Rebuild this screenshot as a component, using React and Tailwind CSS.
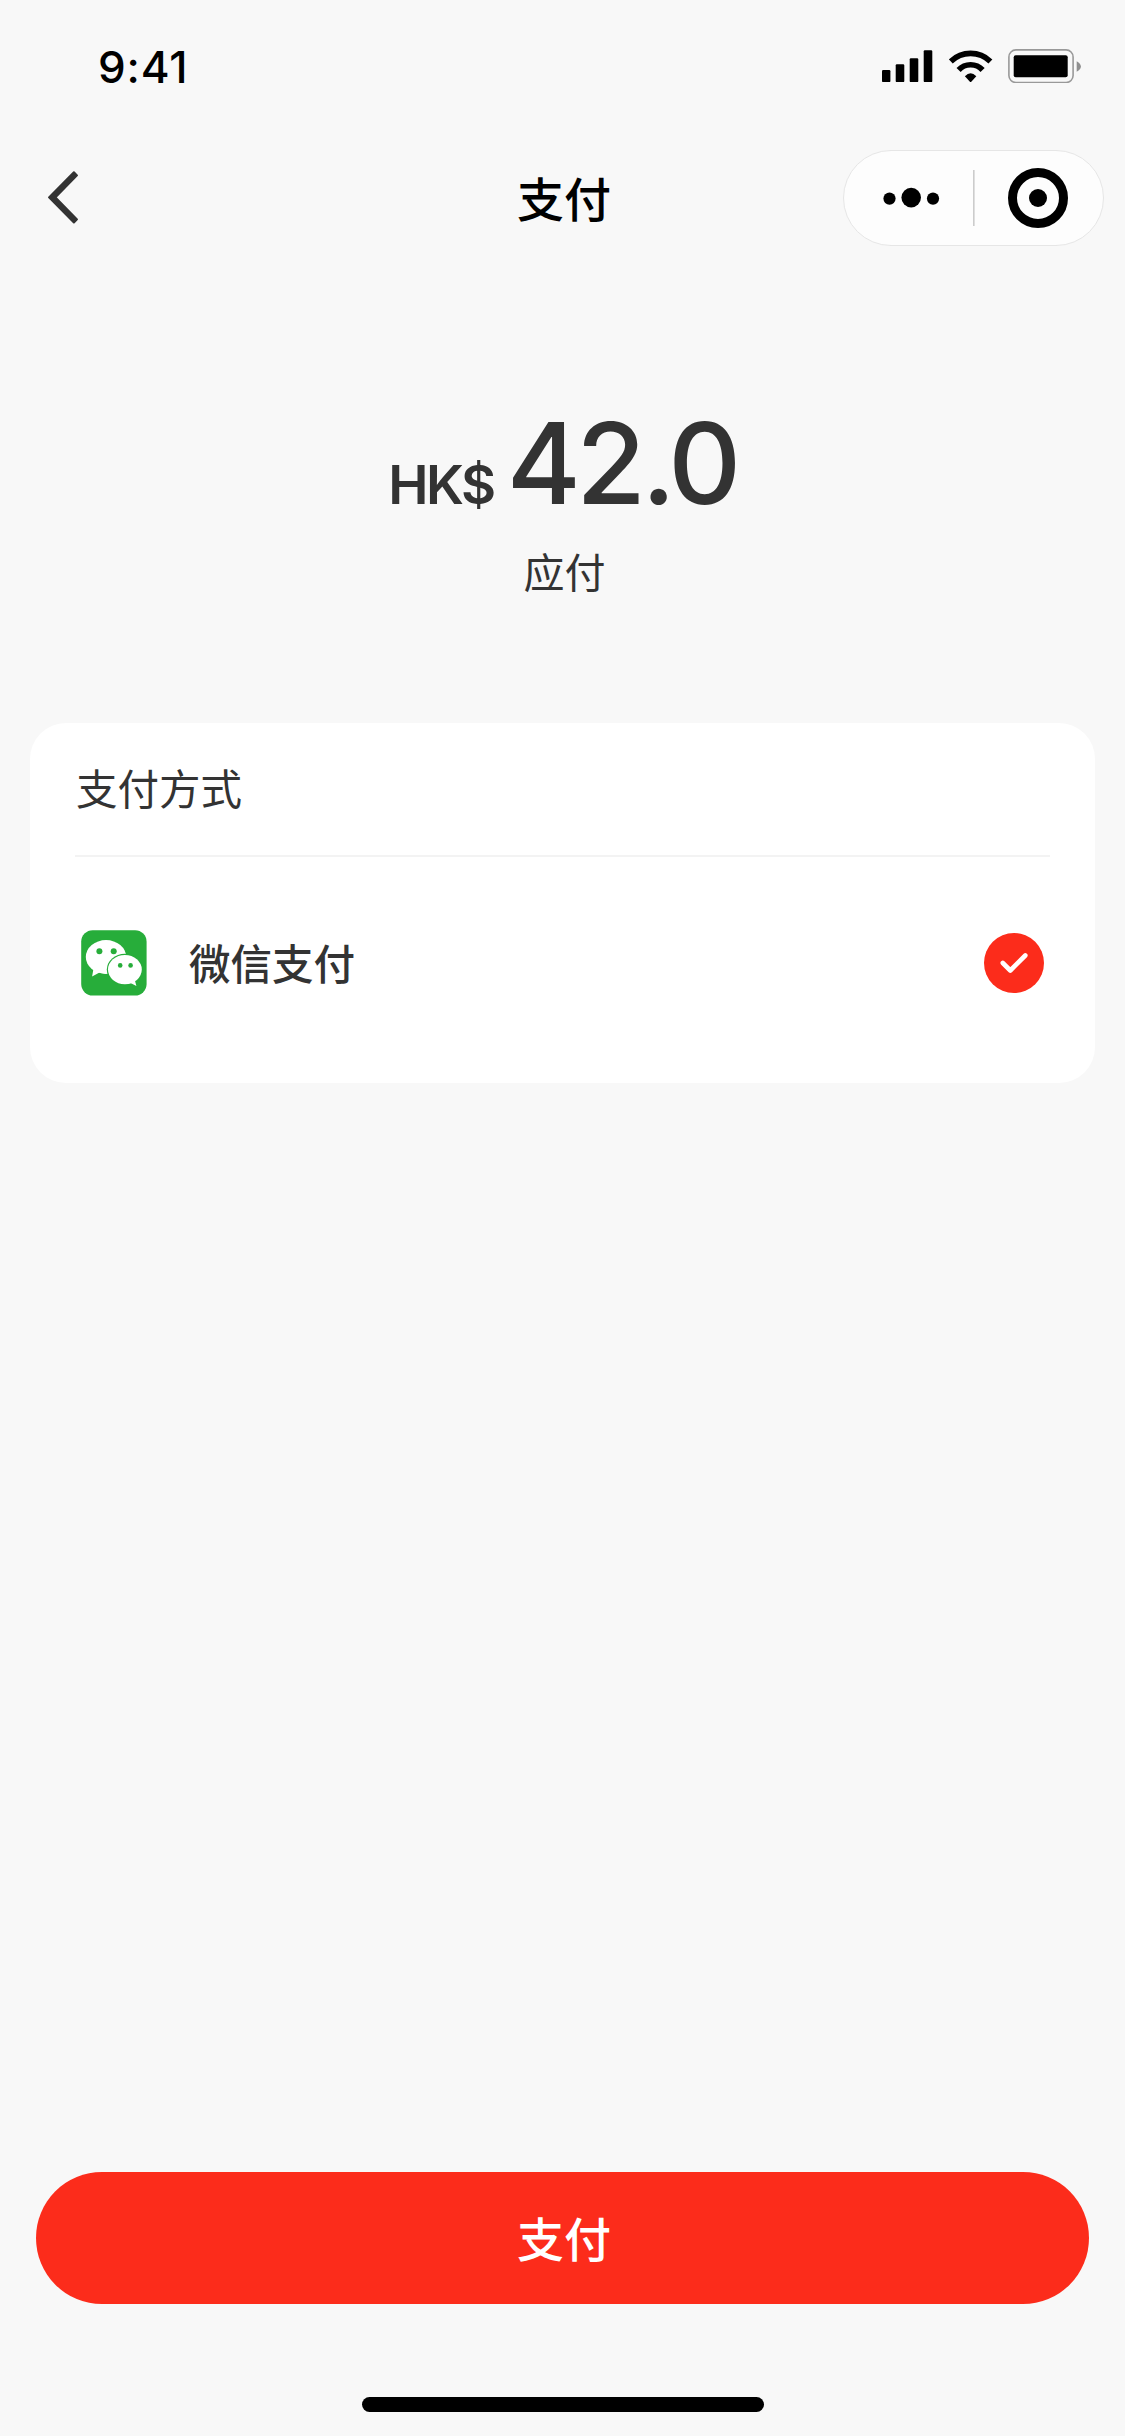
function SignalIcon() {
  return (
    <svg className="h-8 w-[51px]" viewBox="1.2 0 51 32" fill="#000">
      <rect x="1.2" y="20" width="8.4" height="12.2" rx="1.2" />
      <rect x="14.9" y="14.2" width="8.6" height="18" rx="1.2" />
      <rect x="28.9" y="8.2" width="8.6" height="24" rx="1.2" />
      <rect x="42.9" y="0.2" width="8.6" height="32" rx="1.2" />
    </svg>
  );
}

function WifiIcon() {
  return (
    <svg className="h-[33px] w-11" viewBox="0.4 0 44 33">
      <g fill="none" stroke="#000" strokeWidth="5.6">
        <path d="M2.2 11.4 A28.5 28.5 0 0 1 41.8 11.4" />
        <path d="M10 20 A16.2 16.2 0 0 1 34 20" />
      </g>
      <path d="M16.3 26.2 Q22 20.4 27.7 26.2 L22.9 31.6 Q22 32.6 21.1 31.6 Z" fill="#000" />
    </svg>
  );
}

function BatteryIcon() {
  return (
    <svg className="h-[34px] w-[74px]" viewBox="0.3 0 74 34">
      <rect x="1.2" y="0.9" width="64.2" height="32.6" rx="7" fill="none" stroke="#999" strokeWidth="1.6" />
      <rect x="6" y="6.2" width="54" height="22" rx="2" fill="#000" />
      <path d="M69 12.2 Q73.2 14.6 73.2 17.5 Q73.2 20.4 69 22.8 Z" fill="#8f8f8f" />
    </svg>
  );
}

function WeChatIcon() {
  return (
    <svg className="size-[66px]" viewBox="0 0 66 66">
      <rect x="0.2" y="0.2" width="65.4" height="65.4" rx="11.5" fill="#27ad3a" />
      <ellipse cx="25" cy="27" rx="20.2" ry="16.9" fill="#fff" />
      <path d="M12.6 38 L11.1 46.4 L18.5 42.4 L25 43.8 L25 34 Z" fill="#fff" />
      <circle cx="18.4" cy="21.2" r="3" fill="#27ad3a" />
      <circle cx="32.7" cy="21.2" r="3" fill="#27ad3a" />
      <ellipse cx="43.9" cy="39.6" rx="18.1" ry="15.8" fill="#27ad3a" />
      <ellipse cx="43.9" cy="39.6" rx="16.9" ry="14.6" fill="#fff" />
      <path d="M46 54 L49.5 53 L55.4 55.9 L53.8 50 L50 46 Z" fill="#fff" />
      <circle cx="39.2" cy="35.4" r="2.3" fill="#27ad3a" />
      <circle cx="49.6" cy="35.4" r="2.3" fill="#27ad3a" />
    </svg>
  );
}

function StatusBar() {
  return (
    <div className="flex h-[132px] items-start justify-between pr-[43px] pl-[98px]">
      <span className="mt-[42px] text-[44px] leading-[50px] font-medium tracking-[0.8px] text-black">9:41</span>
      <div className="mt-[49px] flex items-center">
        <SignalIcon />
        <span className="ml-4 flex">
          <WifiIcon />
        </span>
        <span className="ml-[15px] flex">
          <BatteryIcon />
        </span>
      </div>
    </div>
  );
}

function NavBar() {
  return (
    <header className="grid h-[132px] grid-cols-[261px_1fr_261px] items-center px-[21px]">
      <button aria-label="返回" className="ml-6 justify-self-start">
        <svg className="h-14 w-9" viewBox="0.5 0 36 56" fill="#333" stroke="#333" strokeWidth="2" strokeLinejoin="round">
          <path d="M4.5 27.4 L29.4 2.3 L32.5 5.4 L11 27.4 L32.5 49.4 L29.4 52.5 Z" />
        </svg>
      </button>
      <h1 className="justify-self-center pt-1 pl-[3px] text-[47px] leading-[66px] font-medium text-black">支付</h1>
      <div className="flex h-24 w-[261px] items-center justify-self-end rounded-full border-[1.5px] border-[#e6e6e6] bg-[#fdfdfd]">
        <svg className="h-24 w-[258px]" viewBox="1 0 258 96">
          <circle cx="46.5" cy="48.6" r="6.1" />
          <circle cx="68.2" cy="47.6" r="9.8" />
          <circle cx="90" cy="48.6" r="6.1" />
          <rect x="130" y="20" width="1.6" height="56" fill="#ccc" />
          <circle cx="195" cy="48" r="25.5" fill="none" stroke="#000" strokeWidth="9" />
          <circle cx="195" cy="48" r="9" />
        </svg>
      </div>
    </header>
  );
}

export default function App() {
  return (
    <div className="flex h-[2436px] w-[1125px] flex-col bg-[#f8f8f8] font-[Inter,'Noto_Sans_CJK_SC',sans-serif] text-[#333]">
      <StatusBar />
      <NavBar />

      <section className="flex h-[459px] flex-col items-center pt-[133px]">
        <div className="flex items-baseline">
          <span className="text-[54px] leading-[132px] font-semibold tracking-[-2.5px]">HK$</span>
          <span className="ml-[13px] text-[113px] leading-[132px] font-medium tracking-[-4.5px]">42.0</span>
        </div>
        <p className="-mt-2 pl-1 text-[41px] leading-[60px]">应付</p>
      </section>

      <section className="mx-[30px] h-[360px] rounded-[36px] bg-white px-[45px]">
        <h2 className="h-[134px] border-b-2 border-[#f3f3f3] pt-[37px] pl-px text-[41.5px] leading-[60px]">支付方式</h2>
        <div className="flex h-[212px] items-center px-[6px]">
          <WeChatIcon />
          <span className="ml-[42px] flex-1 pt-[3px] text-[41.5px] leading-[60px] font-medium">微信支付</span>
          <svg className="size-[60px]" viewBox="0 0 60 60">
            <circle cx="30" cy="30" r="30" fill="#fc2c1b" />
            <path d="M18.8 30 L26.3 37.5 L41.3 22.5" fill="none" stroke="#fff" strokeWidth="4.6" strokeLinecap="round" strokeLinejoin="round" />
          </svg>
        </div>
      </section>

      <footer className="mt-auto flex flex-col items-center px-9 pb-6">
        <button className="h-[132px] w-full rounded-full bg-[#fc2c1b] pt-1 pl-[3px] text-[47px] leading-[66px] font-medium text-white">支付</button>
        <div className="mt-[93px] h-[15px] w-[402px] rounded-full bg-black" />
      </footer>
    </div>
  );
}
